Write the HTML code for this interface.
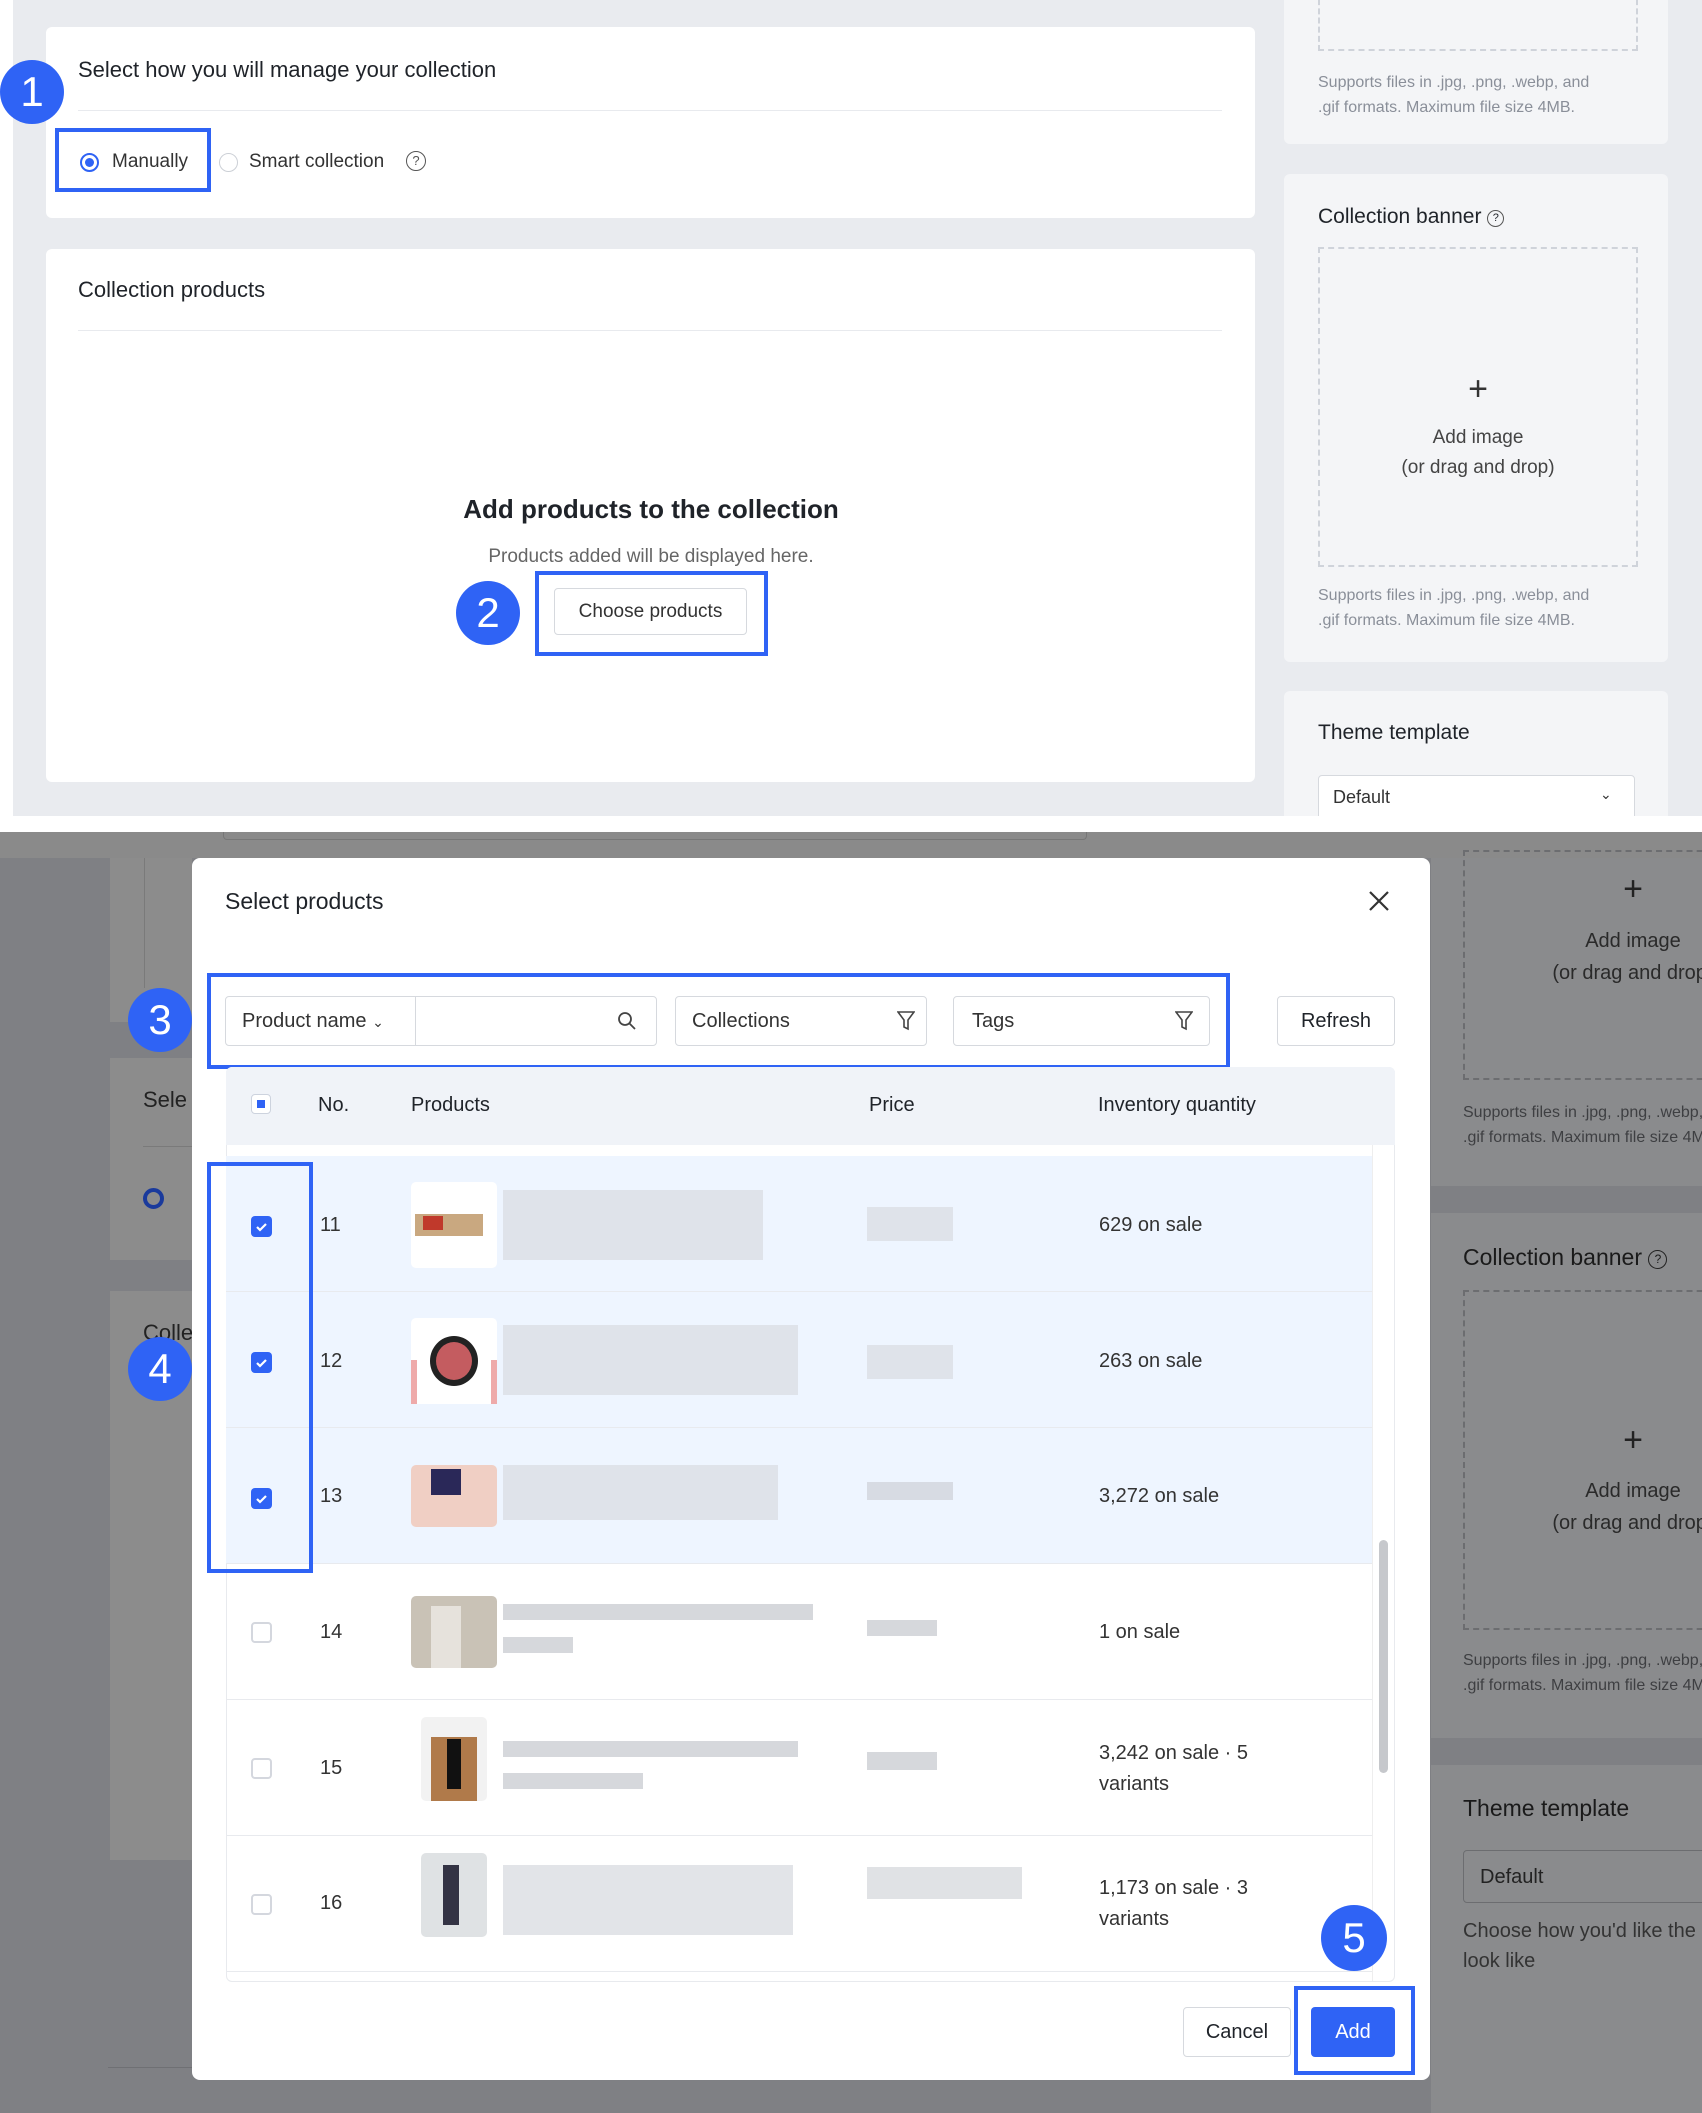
<!DOCTYPE html>
<html><head><meta charset="utf-8"><style>
*{box-sizing:border-box;margin:0;padding:0}
body{width:1702px;height:2113px;position:relative;background:#fff;font-family:"Liberation Sans",sans-serif;color:#1f2329;overflow:hidden}
.a{position:absolute}
.card{position:absolute;background:#fff;border-radius:6px}
.t{position:absolute;white-space:nowrap}
.badge{position:absolute;border-radius:50%;background:#2f63f5;color:#fff;font-size:42px;display:flex;align-items:center;justify-content:center}
.bbox{position:absolute;border:4px solid #2f63f5}
.dash{position:absolute;border:2px dashed #cfd3da}
.gray{color:#8a8f99}
.btn{position:absolute;border:1px solid #d6d9de;border-radius:4px;background:#fff;display:flex;align-items:center;justify-content:center;font-size:20px}
.cb{position:absolute;width:21px;height:21px;border-radius:4px}
.cb.on{background:#2f63f5}
.cb.off{border:2px solid #d4d7de;background:#fff}
.blur{position:absolute;background:#d7dbe3}
.row{position:absolute;left:226px;width:1146px;height:136px;border-bottom:1px solid #e8eaee}
</style></head><body>
<div class="a" style="left:13px;top:0;width:1689px;height:816px;background:#e9ebef"></div>
<div class="card" style="left:46px;top:27px;width:1209px;height:191px"></div>
<div class="t" style="left:78px;top:57px;font-size:22px">Select how you will manage your collection</div>
<div class="a" style="left:78px;top:110px;width:1144px;height:1px;background:#e8eaee"></div>
<div class="a" style="left:80px;top:153px;width:19px;height:19px;border-radius:50%;border:2px solid #2f63f5"></div>
<div class="a" style="left:85px;top:158px;width:9px;height:9px;border-radius:50%;background:#2f63f5"></div>
<div class="t" style="left:112px;top:151px;font-size:19px;color:#333">Manually</div>
<div class="a" style="left:219px;top:153px;width:19px;height:19px;border-radius:50%;border:1px solid #ccd0d6"></div>
<div class="t" style="left:249px;top:151px;font-size:19px;color:#333">Smart collection</div>
<div class="a" style="left:406px;top:151px;width:20px;height:20px;border-radius:50%;border:1.5px solid #555;font-size:13px;text-align:center;line-height:18px;color:#555">?</div>
<div class="bbox" style="left:55px;top:128px;width:156px;height:64px"></div>
<div class="badge" style="left:0;top:60px;width:64px;height:64px">1</div>

<div class="card" style="left:46px;top:249px;width:1209px;height:533px"></div>
<div class="t" style="left:78px;top:277px;font-size:22px">Collection products</div>
<div class="a" style="left:78px;top:330px;width:1144px;height:1px;background:#e8eaee"></div>
<div class="t" style="left:351px;top:494px;width:600px;text-align:center;font-size:26px;font-weight:bold">Add products to the collection</div>
<div class="t" style="left:351px;top:546px;width:600px;text-align:center;font-size:19px;color:#666">Products added will be displayed here.</div>
<div class="btn" style="left:554px;top:588px;width:193px;height:47px;font-size:19px;color:#333">Choose products</div>
<div class="bbox" style="left:535px;top:571px;width:233px;height:85px"></div>
<div class="badge" style="left:456px;top:581px;width:64px;height:64px">2</div>

<div class="card" style="left:1284px;top:-10px;width:384px;height:154px;background:#f4f5f7"></div>
<div class="dash" style="left:1318px;top:-10px;width:320px;height:61px"></div>
<div class="t gray" style="left:1318px;top:70px;font-size:16px;line-height:25px">Supports files in .jpg, .png, .webp, and<br>.gif formats. Maximum file size 4MB.</div>
<div class="card" style="left:1284px;top:174px;width:384px;height:488px;background:#f4f5f7"></div>
<div class="t" style="left:1318px;top:205px;font-size:21px">Collection banner <span style="display:inline-block;width:17px;height:17px;border:1.5px solid #555;border-radius:50%;font-size:11px;text-align:center;line-height:15px;vertical-align:2px">?</span></div>
<div class="dash" style="left:1318px;top:247px;width:320px;height:320px"></div>
<div class="t" style="left:1318px;top:370px;width:320px;text-align:center;font-size:34px;font-weight:200;color:#333">+</div>
<div class="t" style="left:1318px;top:423px;width:320px;text-align:center;font-size:19px;color:#444;line-height:30px">Add image<br>(or drag and drop)</div>
<div class="t gray" style="left:1318px;top:583px;font-size:16px;line-height:25px">Supports files in .jpg, .png, .webp, and<br>.gif formats. Maximum file size 4MB.</div>
<div class="card" style="left:1284px;top:691px;width:384px;height:140px;background:#f4f5f7"></div>
<div class="t" style="left:1318px;top:721px;font-size:21px">Theme template</div>
<div class="a" style="left:1318px;top:775px;width:317px;height:60px;border:1px solid #d6d9de;border-radius:4px;background:#fff"></div>
<div class="t" style="left:1333px;top:787px;font-size:18px;color:#333">Default</div>
<div class="t" style="left:1600px;top:786px;font-size:14px;color:#333">&#8964;</div>
<div class="a" style="left:0;top:816px;width:1702px;height:16px;background:#fff"></div>

<div class="a" style="left:0;top:832px;width:1702px;height:1281px;background:#7f8084"></div>
<div class="a" style="left:0;top:832px;width:1702px;height:26px;background:#8a8a8a"></div>
<div class="a" style="left:223px;top:832px;width:864px;height:8px;border:1px solid #777;border-top:none;border-radius:0 0 4px 4px"></div>
<div class="a" style="left:110px;top:858px;width:82px;height:164px;background:#8c8c8c"></div>
<div class="a" style="left:144px;top:858px;width:1px;height:130px;background:#7a7a7a"></div>
<div class="a" style="left:110px;top:1058px;width:82px;height:202px;background:#8c8c8c"></div>
<div class="t" style="left:143px;top:1087px;font-size:22px;color:#222">Sele</div>
<div class="a" style="left:143px;top:1146px;width:49px;height:1px;background:#7a7a7a"></div>
<div class="a" style="left:143px;top:1188px;width:21px;height:21px;border-radius:50%;border:4px solid #1a3a9c"></div>
<div class="a" style="left:110px;top:1291px;width:82px;height:569px;background:#8c8c8c"></div>
<div class="t" style="left:143px;top:1320px;font-size:22px;color:#222">Colle</div>
<div class="a" style="left:108px;top:2067px;width:100px;height:1px;background:#6f7074"></div>

<div class="a" style="left:1431px;top:858px;width:271px;height:328px;background:#8a8b8d"></div>
<div class="a" style="left:1463px;top:850px;width:260px;height:230px;border:2px dashed #6c6d70"></div>
<div class="t" style="left:1463px;top:870px;width:340px;text-align:center;font-size:34px;font-weight:200;color:#222">+</div>
<div class="t" style="left:1463px;top:925px;width:340px;text-align:center;font-size:20px;color:#2a2a2a;line-height:32px">Add image<br>(or drag and drop)</div>
<div class="t" style="left:1463px;top:1100px;font-size:16px;color:#3e3f42;line-height:25px">Supports files in .jpg, .png, .webp, and<br>.gif formats. Maximum file size 4MB.</div>
<div class="a" style="left:1431px;top:1213px;width:271px;height:525px;background:#8a8b8d"></div>
<div class="t" style="left:1463px;top:1244px;font-size:23px;color:#1a1a1a">Collection banner <span style="display:inline-block;width:19px;height:19px;border:1.5px solid #222;border-radius:50%;font-size:12px;text-align:center;line-height:16px;vertical-align:2px">?</span></div>
<div class="a" style="left:1463px;top:1290px;width:260px;height:340px;border:2px dashed #6c6d70"></div>
<div class="t" style="left:1463px;top:1421px;width:340px;text-align:center;font-size:34px;font-weight:200;color:#222">+</div>
<div class="t" style="left:1463px;top:1475px;width:340px;text-align:center;font-size:20px;color:#2a2a2a;line-height:32px">Add image<br>(or drag and drop)</div>
<div class="t" style="left:1463px;top:1648px;font-size:16px;color:#3e3f42;line-height:25px">Supports files in .jpg, .png, .webp, and<br>.gif formats. Maximum file size 4MB.</div>
<div class="a" style="left:1431px;top:1765px;width:271px;height:348px;background:#8a8b8d"></div>
<div class="t" style="left:1463px;top:1795px;font-size:23px;color:#1a1a1a">Theme template</div>
<div class="a" style="left:1463px;top:1850px;width:260px;height:53px;border:1px solid #6c6d70;border-radius:4px"></div>
<div class="t" style="left:1480px;top:1866px;font-size:20px;color:#222">Default</div>
<div class="t" style="left:1463px;top:1916px;font-size:20px;color:#333;line-height:30px">Choose how you'd like the<br>look like</div>

<div class="card" style="left:192px;top:858px;width:1238px;height:1222px;border-radius:8px"></div>
<div class="t" style="left:225px;top:888px;font-size:23px">Select products</div>
<svg class="a" style="left:1368px;top:890px" width="22" height="22" viewBox="0 0 22 22"><path d="M2 2L20 20M20 2L2 20" stroke="#333" stroke-width="2.2"/></svg>

<div class="a" style="left:225px;top:996px;width:432px;height:50px;border:1px solid #d6d9de;border-radius:4px"></div>
<div class="a" style="left:415px;top:996px;width:1px;height:50px;background:#d6d9de"></div>
<div class="t" style="left:242px;top:1010px;font-size:20px;color:#333">Product name <span style="font-size:14px">&#8964;</span></div>
<svg class="a" style="left:617px;top:1011px" width="20" height="20" viewBox="0 0 20 20"><circle cx="8" cy="8" r="6" fill="none" stroke="#444" stroke-width="1.8"/><path d="M12.5 12.5L18 18" stroke="#444" stroke-width="1.8"/></svg>
<div class="a" style="left:675px;top:996px;width:252px;height:50px;border:1px solid #d6d9de;border-radius:4px"></div>
<div class="t" style="left:692px;top:1010px;font-size:20px;color:#333">Collections</div>
<svg class="a" style="left:897px;top:1011px" width="18" height="20" viewBox="0 0 18 20"><path d="M1 1H17L11 9V18L7 16V9Z" fill="none" stroke="#444" stroke-width="1.6"/></svg>
<div class="a" style="left:953px;top:996px;width:257px;height:50px;border:1px solid #d6d9de;border-radius:4px"></div>
<div class="t" style="left:972px;top:1010px;font-size:20px;color:#333">Tags</div>
<svg class="a" style="left:1175px;top:1011px" width="18" height="20" viewBox="0 0 18 20"><path d="M1 1H17L11 9V18L7 16V9Z" fill="none" stroke="#444" stroke-width="1.6"/></svg>
<div class="btn" style="left:1277px;top:996px;width:118px;height:50px">Refresh</div>
<div class="bbox" style="left:207px;top:973px;width:1023px;height:96px"></div>
<div class="badge" style="left:128px;top:988px;width:64px;height:64px">3</div>

<div class="a" style="left:226px;top:1067px;width:1169px;height:915px;border:1px solid #e8eaee;border-radius:6px"></div>
<div class="a" style="left:226px;top:1067px;width:1169px;height:78px;background:#f0f3f8;border-radius:6px 6px 0 0"></div>
<div class="a" style="left:251px;top:1094px;width:20px;height:20px;border:1.5px solid #cdd3de;border-radius:4px;background:#fff"></div>
<div class="a" style="left:257px;top:1100px;width:8px;height:8px;background:#2f63f5"></div>
<div class="t" style="left:318px;top:1094px;font-size:20px">No.</div>
<div class="t" style="left:411px;top:1094px;font-size:20px">Products</div>
<div class="t" style="left:869px;top:1094px;font-size:20px">Price</div>
<div class="t" style="left:1098px;top:1094px;font-size:20px">Inventory quantity</div>

<div class="row" style="top:1156px;background:#eef5ff"></div>
<div class="row" style="top:1292px;background:#eef5ff"></div>
<div class="row" style="top:1428px;background:#eef5ff"></div>
<div class="row" style="top:1564px"></div>
<div class="row" style="top:1700px"></div>
<div class="row" style="top:1836px"></div>
<div class="a" style="left:1372px;top:1145px;width:1px;height:836px;background:#eee"></div>
<div class="a" style="left:1379px;top:1540px;width:9px;height:233px;border-radius:5px;background:#c6c8cc"></div>

<div class="cb on" style="left:251px;top:1216px"><svg width="21" height="21"><path d="M6 11l3 3 6-6" stroke="#fff" stroke-width="2.2" fill="none"/></svg></div>
<div class="cb on" style="left:251px;top:1352px"><svg width="21" height="21"><path d="M6 11l3 3 6-6" stroke="#fff" stroke-width="2.2" fill="none"/></svg></div>
<div class="cb on" style="left:251px;top:1488px"><svg width="21" height="21"><path d="M6 11l3 3 6-6" stroke="#fff" stroke-width="2.2" fill="none"/></svg></div>
<div class="cb off" style="left:251px;top:1622px"></div>
<div class="cb off" style="left:251px;top:1758px"></div>
<div class="cb off" style="left:251px;top:1894px"></div>
<div class="t" style="left:320px;top:1214px;font-size:20px;color:#333">11</div>
<div class="t" style="left:320px;top:1350px;font-size:20px;color:#333">12</div>
<div class="t" style="left:320px;top:1485px;font-size:20px;color:#333">13</div>
<div class="t" style="left:320px;top:1621px;font-size:20px;color:#333">14</div>
<div class="t" style="left:320px;top:1757px;font-size:20px;color:#333">15</div>
<div class="t" style="left:320px;top:1892px;font-size:20px;color:#333">16</div>

<div class="a" style="left:411px;top:1182px;width:86px;height:86px;background:#fff;border-radius:5px"><div class="a" style="left:4px;top:32px;width:68px;height:22px;background:#c9a880"></div><div class="a" style="left:12px;top:34px;width:20px;height:14px;background:#c0392b"></div></div>
<div class="a" style="left:411px;top:1318px;width:86px;height:86px;background:#fff;border-radius:5px"><div class="a" style="left:0;top:42px;width:6px;height:44px;background:#eaa"></div><div class="a" style="left:80px;top:42px;width:6px;height:44px;background:#eaa"></div><div class="a" style="left:19px;top:18px;width:48px;height:50px;border-radius:50%;background:#c45c60;border:6px solid #222"></div></div>
<div class="a" style="left:411px;top:1465px;width:86px;height:62px;background:#f0cfc4;border-radius:5px"><div class="a" style="left:20px;top:4px;width:30px;height:26px;background:#2a2858"></div></div>
<div class="a" style="left:411px;top:1596px;width:86px;height:72px;background:#c9c2b6;border-radius:5px"><div class="a" style="left:20px;top:10px;width:30px;height:62px;background:#e6e2dc"></div></div>
<div class="a" style="left:421px;top:1717px;width:66px;height:84px;background:#f2f2f2;border-radius:5px"><div class="a" style="left:10px;top:20px;width:46px;height:64px;background:#b07a4a"></div><div class="a" style="left:26px;top:22px;width:14px;height:50px;background:#111"></div></div>
<div class="a" style="left:421px;top:1853px;width:66px;height:84px;background:#dfe2e4;border-radius:5px"><div class="a" style="left:22px;top:12px;width:16px;height:60px;background:#334"></div></div>

<div class="blur" style="left:503px;top:1190px;width:260px;height:70px;background:#dfe3ea"></div>
<div class="blur" style="left:503px;top:1325px;width:295px;height:70px;background:#dfe3ea"></div>
<div class="blur" style="left:503px;top:1465px;width:275px;height:55px;background:#dfe3ea"></div>
<div class="blur" style="left:503px;top:1604px;width:310px;height:16px;background:#d6d8dc"></div>
<div class="blur" style="left:503px;top:1637px;width:70px;height:16px;background:#d6d8dc"></div>
<div class="blur" style="left:503px;top:1741px;width:295px;height:16px;background:#d6d8dc"></div>
<div class="blur" style="left:503px;top:1773px;width:140px;height:16px;background:#d6d8dc"></div>
<div class="blur" style="left:503px;top:1865px;width:290px;height:70px;background:#e2e4e8"></div>
<div class="blur" style="left:867px;top:1207px;width:86px;height:34px;background:#dfe3ea"></div>
<div class="blur" style="left:867px;top:1345px;width:86px;height:34px;background:#dfe3ea"></div>
<div class="blur" style="left:867px;top:1482px;width:86px;height:18px;background:#d7dbe3"></div>
<div class="blur" style="left:867px;top:1620px;width:70px;height:16px;background:#d6d8dc"></div>
<div class="blur" style="left:867px;top:1752px;width:70px;height:18px;background:#d6d8dc"></div>
<div class="blur" style="left:867px;top:1867px;width:155px;height:32px;background:#e0e2e5"></div>

<div class="t" style="left:1099px;top:1214px;font-size:20px;color:#333">629 on sale</div>
<div class="t" style="left:1099px;top:1350px;font-size:20px;color:#333">263 on sale</div>
<div class="t" style="left:1099px;top:1485px;font-size:20px;color:#333">3,272 on sale</div>
<div class="t" style="left:1099px;top:1621px;font-size:20px;color:#333">1 on sale</div>
<div class="t" style="left:1099px;top:1738px;font-size:20px;color:#333;line-height:31px">3,242 on sale · 5<br>variants</div>
<div class="t" style="left:1099px;top:1873px;font-size:20px;color:#333;line-height:31px">1,173 on sale · 3<br>variants</div>

<div class="bbox" style="left:207px;top:1162px;width:106px;height:411px"></div>
<div class="badge" style="left:128px;top:1337px;width:64px;height:64px">4</div>

<div class="btn" style="left:1183px;top:2007px;width:108px;height:50px">Cancel</div>
<div class="a" style="left:1311px;top:2007px;width:84px;height:50px;background:#2f63f5;border-radius:4px;color:#fff;font-size:20px;display:flex;align-items:center;justify-content:center">Add</div>
<div class="bbox" style="left:1294px;top:1986px;width:121px;height:89px"></div>
<div class="badge" style="left:1321px;top:1905px;width:66px;height:66px">5</div>
</body></html>
